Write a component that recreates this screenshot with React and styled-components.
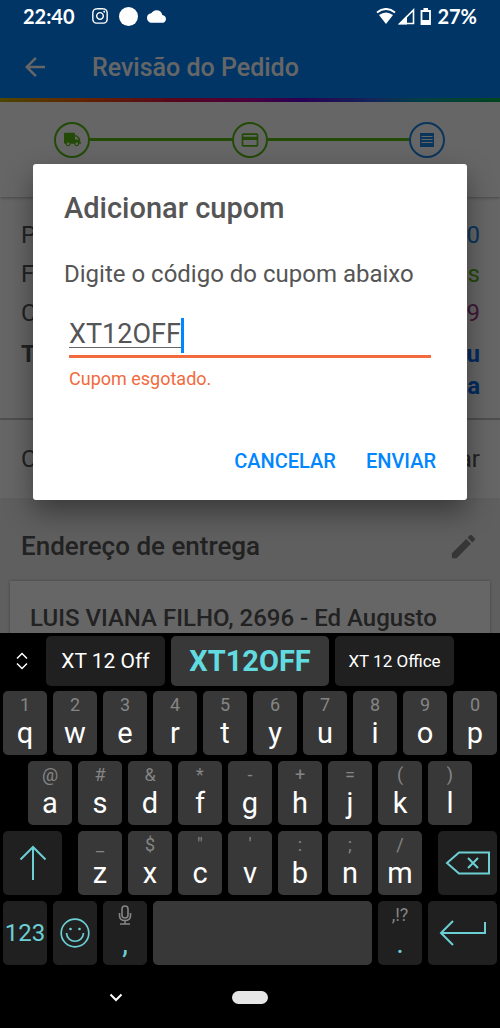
import React, { useState } from 'react';
import styled, { createGlobalStyle } from 'styled-components';
import { MdArrowBack, MdCloud, MdCreditCard, MdEdit } from 'react-icons/md';
import { FaInstagram, FaTruck } from 'react-icons/fa';

const GlobalStyle = createGlobalStyle`
  * {
    box-sizing: border-box;
  }
  body {
    margin: 0;
    background-color: #000;
    font-family: Roboto, "Noto Sans", sans-serif;
  }
  button, input {
    font-family: inherit;
    border: none;
    background: none;
    padding: 0;
    margin: 0;
    outline: none;
  }
  h1, h2, p {
    margin: 0;
  }
`;

const Screen = styled.div`
  display: flex;
  flex-direction: column;
  height: 100vh;
`;

const Page = styled.div`
  position: relative;
  flex: 1;
  min-height: 0;
  overflow: hidden;
  background-color: #ededed;
`;

const StatusBar = styled.div`
  position: absolute;
  z-index: 3;
  top: 0;
  left: 0;
  right: 0;
  display: flex;
  align-items: center;
  height: 32px;
  padding: 0 23px;
  color: #fff;
  font-family: Lato, sans-serif;
  font-size: 20px;
  font-weight: 700;
  .clock {
    margin-right: 16px;
  }
  .dot {
    width: 19px;
    height: 19px;
    margin: 0 9px 0 10px;
    border-radius: 50%;
    background-color: #fff;
  }
  .right {
    display: flex;
    align-items: center;
    gap: 2px;
    margin-left: auto;
  }
`;

const AppBar = styled.header`
  display: flex;
  align-items: center;
  gap: 42px;
  height: 98px;
  padding: 36px 20px 0;
  background-color: #0086ff;
  color: #fff;
  button {
    display: flex;
    color: inherit;
  }
  h1 {
    font-size: 25px;
    font-weight: 500;
  }
`;

const Rainbow = styled.div`
  height: 4px;
  background: linear-gradient(
    90deg,
    #c8b400,
    #ff5a00 17%,
    #e0104a 35%,
    #c0009a 50%,
    #6a00d0 60%,
    #3060e0 75%,
    #00a0b0 84%,
    #00b050
  );
`;

const Steps = styled.div`
  position: relative;
  display: flex;
  align-items: center;
  height: 95px;
  padding: 0 55px 20px 54px;
  background-color: #fff;
  box-shadow: 0 1px 3px rgba(0, 0, 0, 0.3);
`;

const Step = styled.div`
  display: flex;
  align-items: center;
  justify-content: center;
  width: 36px;
  height: 36px;
  border: 2px solid;
  border-radius: 50%;
  color: ${({ $active }) => ($active ? '#1a84e8' : '#57b812')};
`;

const StepLine = styled.div`
  flex: 1;
  height: 3px;
  background-color: #57b812;
`;

const Summary = styled.section`
  padding: 19px 20px 16px 21px;
  background-color: #fff;
  border-bottom: 2px solid #c4c4c4;
`;

const Row = styled.div`
  display: flex;
  justify-content: space-between;
  color: #555;
  font-size: 24px;
  line-height: 39px;
  .value {
    color: ${({ $color }) => $color};
    text-align: right;
  }
`;

const TotalRow = styled(Row)`
  padding-top: 5px;
  font-weight: 700;
  line-height: 32px;
`;

const CouponRow = styled(Row)`
  padding: 0 20px 0 21px;
  background-color: #fff;
  line-height: 78px;
`;

const SectionTitle = styled.div`
  display: flex;
  align-items: center;
  justify-content: space-between;
  height: 83px;
  padding: 13px 21px 0;
  color: #555;
  h2 {
    font-size: 26px;
    font-weight: 500;
  }
  button {
    display: flex;
    color: #888;
  }
`;

const AddressCard = styled.div`
  margin: 0 10px;
  padding: 18px 20px;
  background-color: #fff;
  box-shadow: 0 0 3px rgba(0, 0, 0, 0.3);
  color: #555;
  font-size: 24px;
  font-weight: 500;
  line-height: 38px;
  white-space: nowrap;
`;

const Scrim = styled.div`
  position: absolute;
  z-index: 2;
  inset: 0;
  display: flex;
  align-items: center;
  padding: 30px 33px 0;
  background-color: rgba(0, 0, 0, 0.6);
`;

const Dialog = styled.form`
  flex: 1;
  padding: 25px 31px 20px;
  border-radius: 3px;
  background-color: #fff;
  box-shadow: 0 12px 28px rgba(0, 0, 0, 0.4);
  color: #555;
  h2 {
    font-size: 29px;
    font-weight: 500;
    line-height: 38px;
  }
  label {
    display: block;
    margin-top: 28px;
    font-size: 24px;
    line-height: 38px;
  }
`;

const Field = styled.div`
  display: flex;
  align-items: flex-end;
  height: 40px;
  margin: 25px 5px 0;
  padding-bottom: 2px;
  border-bottom: 3px solid #f26a3d;
  input {
    field-sizing: content;
    height: 27px;
    margin-bottom: 5px;
    border-bottom: 1px solid #666;
    color: #555;
    font-size: 27px;
    line-height: 27px;
  }
  .caret {
    width: 3px;
    height: 35px;
    background-color: #0086ff;
  }
`;

const FieldError = styled.p`
  margin: 8px 5px 0;
  color: #f26a3d;
  font-size: 18px;
  line-height: 26px;
`;

const Actions = styled.div`
  display: flex;
  justify-content: flex-end;
  gap: 30px;
  margin-top: 50px;
  button {
    color: #0086ff;
    font-size: 20px;
    font-weight: 500;
    line-height: 38px;
  }
`;

const Keyboard = styled.div`
  display: flex;
  flex-direction: column;
  gap: 6px;
  padding-top: 3px;
  background-color: #000;
`;

const Suggestions = styled.div`
  display: grid;
  grid-template-columns: 43fr 125fr 164fr 125fr 43fr;
  height: 50px;
  margin-bottom: -1px;
`;

const Toggle = styled.button`
  display: flex;
  align-items: center;
  justify-content: center;
  color: #fff;
`;

const Suggestion = styled.button`
  margin: 0 3px;
  border-radius: 5px;
  background-color: ${({ $main }) => ($main ? '#383838' : '#202020')};
  color: ${({ $main }) => ($main ? '#62dbe0' : '#fff')};
  font-size: ${({ $size }) => $size}px;
  font-weight: ${({ $main }) => ($main ? 700 : 400)};
  white-space: nowrap;
`;

const KeyRow = styled.div`
  display: grid;
  grid-template-columns: repeat(100, 1fr);
  height: 64px;
`;

const Key = styled.button`
  grid-column: ${({ $start }) => $start || 'auto'} / span ${({ $span }) => $span || 10};
  display: flex;
  flex-direction: column;
  align-items: center;
  justify-content: ${({ $center }) => ($center ? 'center' : 'flex-start')};
  min-width: 0;
  margin: 0 3px;
  border-radius: 5px;
  background-color: ${({ $dark }) => ($dark ? '#202020' : '#383838')};
  color: ${({ $dark }) => ($dark ? '#6ccfd4' : '#fff')};
  font-size: ${({ $center }) => ($center ? 24 : 29)}px;
  line-height: 30px;
  .hint {
    display: flex;
    align-items: center;
    justify-content: center;
    height: 27px;
    color: #858585;
    font-size: 18px;
    line-height: 27px;
  }
`;

const NavBar = styled.nav`
  display: grid;
  grid-template-columns: 1fr 36px 1fr;
  align-items: center;
  height: 57px;
  padding-bottom: 5px;
  button {
    display: flex;
    color: #fff;
  }
  .hide {
    justify-self: center;
    padding: 5px;
  }
  .pill {
    height: 13px;
    border-radius: 7px;
    background-color: #e6e6e6;
  }
`;

const Stroke = ({ w, h, width = 2, children }) => (
  <svg width={w} height={h} viewBox={`0 0 ${w} ${h}`} fill="none" stroke="currentColor" strokeWidth={width}>
    {children}
  </svg>
);

const firstRow = ['q1', 'w2', 'e3', 'r4', 't5', 'y6', 'u7', 'i8', 'o9', 'p0'];
const secondRow = ['a@', 's#', 'd&', 'f*', 'g-', 'h+', 'j=', 'k(', 'l)'];
const thirdRow = ['z_', 'x$', 'c"', "v'", 'b:', 'n;', 'm/'];

const renderKeys = (keys, start) =>
  keys.map(([letter, hint], i) => (
    <Key key={letter} type="button" $start={start + i * 10}>
      <span className="hint">{hint}</span>
      <span>{letter}</span>
    </Key>
  ));

export default function App() {
  const [code, setCode] = useState('XT12OFF');
  return (
    <Screen>
      <GlobalStyle />
      <Page>
        <StatusBar>
          <span className="clock">22:40</span>
          <FaInstagram size={18} />
          <span className="dot" />
          <MdCloud size={19} />
          <span className="right">
            <svg width="20" height="17" viewBox="0 0 20 17">
              <path d="M1 4.5Q10-2.5 19 4.5" fill="none" stroke="#fff" strokeWidth="2" />
              <path d="M3 7Q10 1.8 17 7L10 16Z" fill="#fff" />
            </svg>
            <svg width="17" height="17" viewBox="0 0 17 17">
              <path d="M2 15.5L15.5 2V15.5Z" fill="none" stroke="#fff" strokeWidth="1.6" />
              <path d="M0 16.5L9 7.5V16.5Z" fill="#fff" />
            </svg>
            <svg width="18" height="17" viewBox="0 0 18 17">
              <path d="M4.5 3H13V16H4.5Z" fill="none" stroke="#fff" strokeWidth="1.8" />
              <path d="M6.5 0H11V3H6.5ZM5 12H13V16H5Z" fill="#fff" />
            </svg>
            <span>27%</span>
          </span>
        </StatusBar>
        <AppBar>
          <button type="button" aria-label="Voltar">
            <MdArrowBack size={30} />
          </button>
          <h1>Revisão do Pedido</h1>
        </AppBar>
        <Rainbow />
        <Steps>
          <Step>
            <FaTruck size={17} />
          </Step>
          <StepLine />
          <Step>
            <MdCreditCard size={20} />
          </Step>
          <StepLine />
          <Step $active>
            <svg width="16" height="16" viewBox="0 0 16 16">
              <path d="M1 1H15V15H1Z" fill="currentColor" />
              <path d="M2.5 4.5H13.5M2.5 7.5H13.5M2.5 10.5H13.5" stroke="#fff" strokeWidth="1.1" />
            </svg>
          </Step>
        </Steps>
        <Summary>
          <Row $color="#1a84e8">
            <span>P</span>
            <span className="value">0</span>
          </Row>
          <Row $color="#57b812">
            <span>F</span>
            <span className="value">s</span>
          </Row>
          <Row $color="#a0408c">
            <span>C</span>
            <span className="value">9</span>
          </Row>
          <TotalRow $color="#0a6cf0">
            <span>T</span>
            <span className="value">
              u
              <br />a
            </span>
          </TotalRow>
        </Summary>
        <CouponRow $color="#555">
          <span>C</span>
          <span className="value">ar</span>
        </CouponRow>
        <SectionTitle>
          <h2>Endereço de entrega</h2>
          <button type="button" aria-label="Editar">
            <MdEdit size={31} />
          </button>
        </SectionTitle>
        <AddressCard>LUIS VIANA FILHO, 2696 - Ed Augusto</AddressCard>
        <Scrim>
          <Dialog onSubmit={e => e.preventDefault()}>
            <h2>Adicionar cupom</h2>
            <label htmlFor="coupon">Digite o código do cupom abaixo</label>
            <Field>
              <input id="coupon" value={code} spellCheck={false} onChange={e => setCode(e.target.value)} />
              <span className="caret" />
            </Field>
            <FieldError>Cupom esgotado.</FieldError>
            <Actions>
              <button type="button">CANCELAR</button>
              <button type="submit">ENVIAR</button>
            </Actions>
          </Dialog>
        </Scrim>
      </Page>
      <Keyboard>
        <Suggestions>
          <Toggle type="button" aria-label="Expandir">
            <Stroke w={14} h={18} width={1.5}>
              <path d="M2 6.5L7 1.5L12 6.5M2 11.5L7 16.5L12 11.5" />
            </Stroke>
          </Toggle>
          <Suggestion type="button" $size={21}>
            XT 12 Off
          </Suggestion>
          <Suggestion type="button" $size={29} $main>
            XT12OFF
          </Suggestion>
          <Suggestion type="button" $size={17}>
            XT 12 Office
          </Suggestion>
        </Suggestions>
        <KeyRow>{renderKeys(firstRow, 1)}</KeyRow>
        <KeyRow>{renderKeys(secondRow, 6)}</KeyRow>
        <KeyRow>
          <Key type="button" aria-label="Shift" $start={1} $span={13} $dark $center>
            <Stroke w={28} h={36}>
              <path d="M14 35V1.5M1.5 14.5L14 2L26.5 14.5" />
            </Stroke>
          </Key>
          {renderKeys(thirdRow, 16)}
          <Key type="button" aria-label="Apagar" $start={88} $span={13} $dark $center>
            <Stroke w={46} h={24}>
              <path d="M2 12L14 1.5H44V22.5H14ZM23 7L33 17M33 7L23 17" />
            </Stroke>
          </Key>
        </KeyRow>
        <KeyRow>
          <Key type="button" $dark $center>
            123
          </Key>
          <Key type="button" aria-label="Emoji" $dark $center>
            <Stroke w={30} h={30} width={1.7}>
              <circle cx="15" cy="15" r="13.8" />
              <path d="M6.5 15C7 26 23 26 23.5 15" />
              <circle cx="10.5" cy="11" r="1.3" fill="currentColor" stroke="none" />
              <circle cx="19.5" cy="11" r="1.3" fill="currentColor" stroke="none" />
            </Stroke>
          </Key>
          <Key type="button" $dark>
            <span className="hint">
              <Stroke w={14} h={20} width={1.6}>
                <rect x="4" y="1" width="6" height="12" rx="3" />
                <path d="M1.5 8V10.5Q1.5 15.5 7 15.5Q12.5 15.5 12.5 10.5V8M7 15.5V19M2 19H12" />
              </Stroke>
            </span>
            <span>,</span>
          </Key>
          <Key type="button" aria-label="Espaço" $span={45} />
          <Key type="button" $dark>
            <span className="hint">,!?</span>
            <span>.</span>
          </Key>
          <Key type="button" aria-label="Enter" $span={15} $dark $center>
            <Stroke w={48} h={26}>
              <path d="M14 1L2 13L14 25M2 13H46V2" />
            </Stroke>
          </Key>
        </KeyRow>
        <NavBar>
          <button type="button" className="hide" aria-label="Ocultar teclado">
            <Stroke w={14} h={9}>
              <path d="M1.5 1.5L7 7L12.5 1.5" />
            </Stroke>
          </button>
          <button type="button" className="pill" aria-label="Início" />
        </NavBar>
      </Keyboard>
    </Screen>
  );
}
